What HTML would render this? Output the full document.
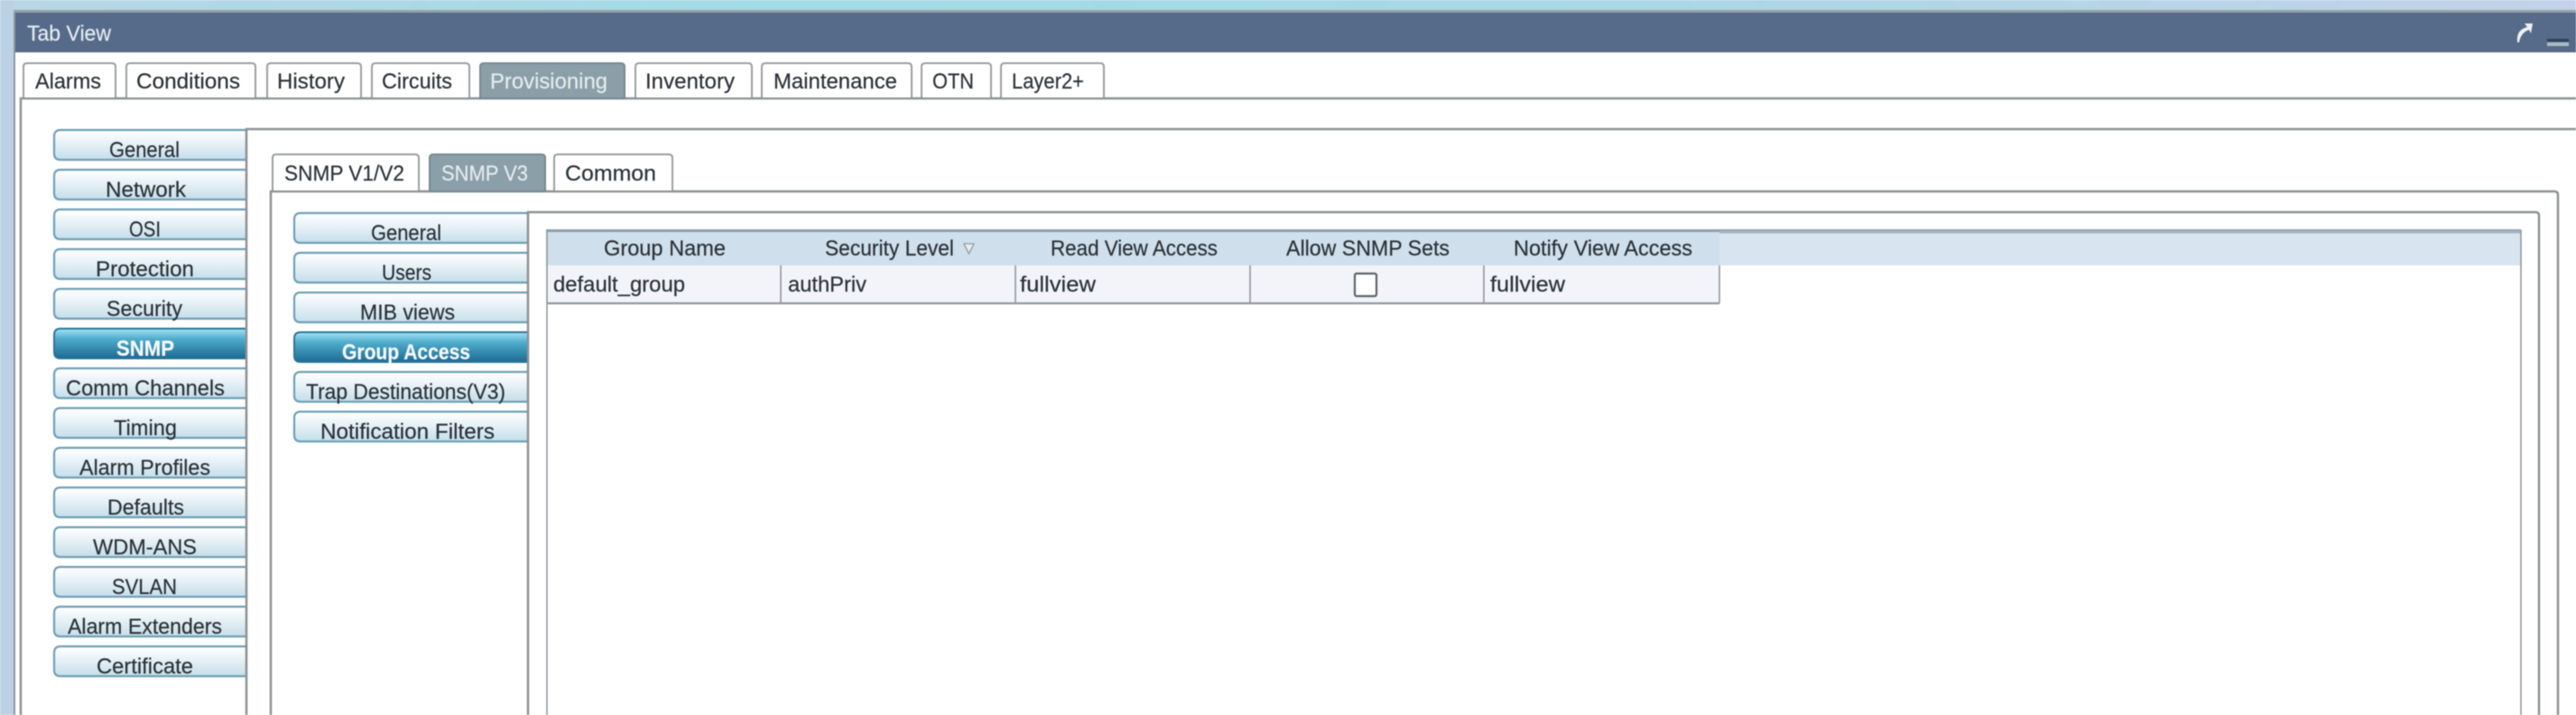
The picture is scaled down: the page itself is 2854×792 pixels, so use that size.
<!DOCTYPE html>
<html><head><meta charset="utf-8"><title>Tab View</title>
<style>
html,body{margin:0;padding:0;width:2854px;height:792px;overflow:hidden;background:#fff}
svg{display:block;filter:blur(.6px)}
text{font-family:"Liberation Sans",sans-serif;font-size:24.500px;fill:#2b3138;stroke:#2b3138;stroke-width:.2px}
.w{fill:#e4ebef;stroke:#e4ebef}
.b{fill:#f4f9fb;stroke:#f4f9fb;font-weight:bold}
.tab{fill:#fff;stroke:#9a9d9f;stroke-width:2}
.act{fill:#8b9fa8;stroke:#77888f;stroke-width:2}
.ln{stroke:#8e9193;stroke-width:2.5;fill:none}
.dv{stroke:#8f979d;stroke-width:1.6}
</style></head><body>
<svg width="2854" height="792" viewBox="0 0 2854 792" xmlns="http://www.w3.org/2000/svg">
<defs>
<linearGradient id="sky" x1="0" x2="1" y1="0" y2="0"><stop offset="0" stop-color="#b9d6e4"/><stop offset=".3" stop-color="#a2dbe5"/><stop offset=".6" stop-color="#a8d8e4"/><stop offset="1" stop-color="#c3d2e8"/></linearGradient>
<linearGradient id="btn" x1="0" x2="0" y1="0" y2="1"><stop offset="0" stop-color="#fff"/><stop offset=".2" stop-color="#f6fafc"/><stop offset="1" stop-color="#c5deea"/></linearGradient>
<linearGradient id="on" x1="0" x2="0" y1="0" y2="1"><stop offset="0" stop-color="#a4e4f8"/><stop offset=".35" stop-color="#4eaccb"/><stop offset="1" stop-color="#1d6a93"/></linearGradient>
<g id="b"><path d="M214 1H8Q1 1 1 8V27Q1 34 8 34H214Z" fill="url(#btn)" stroke="#6e9fb6" stroke-width="2.2"/></g>
<g id="bon"><path d="M214 1H8Q1 1 1 8V27Q1 34 8 34H214Z" fill="url(#on)" stroke="#2b7598" stroke-width="2"/></g>
<g id="s"><path d="M260 1H8Q1 1 1 8V27Q1 34 8 34H260Z" fill="url(#btn)" stroke="#6e9fb6" stroke-width="2.2"/></g>
<g id="son"><path d="M260 1H8Q1 1 1 8V27Q1 34 8 34H260Z" fill="url(#on)" stroke="#2b7598" stroke-width="2"/></g>
</defs>

<rect width="2854" height="792" fill="#fff"/>
<rect width="2854" height="13" fill="url(#sky)"/>
<rect y="0" width="15" height="792" fill="#bcd1e3"/>
<rect x="15" y="11" width="2839" height="3" fill="#94a2a8"/>
<rect x="15" y="14" width="2839" height="44" fill="#566b8a"/>
<rect x="15" y="14" width="2" height="778" fill="#8c979e"/>
<text x="30" y="45" class="w" textLength="93" lengthAdjust="spacingAndGlyphs">Tab View</text>
<path d="M2789 47C2788 37 2792 32 2800 30L2797 26L2806 26L2804 37L2802 33C2796 35 2792 40 2791 47Z" fill="#eef2f5"/>
<rect x="2822" y="43" width="24" height="3" fill="#2f4257"/>
<rect x="2822" y="47" width="24" height="4" fill="#a9bcc1"/>

<!-- main tabs -->
<path class="ln" d="M23 792V109H2854"/>
<path class="tab" d="M26 108V74Q26 70 30 70H124Q128 70 128 74V108"/>
<path class="tab" d="M140 108V74Q140 70 144 70H279Q283 70 283 74V108"/>
<path class="tab" d="M296 108V74Q296 70 300 70H396Q400 70 400 74V108"/>
<path class="tab" d="M412 108V74Q412 70 416 70H516Q520 70 520 74V108"/>
<path class="act" d="M532 109V74Q532 70 536 70H688Q692 70 692 74V109Z"/>
<path class="tab" d="M704 108V74Q704 70 708 70H829Q833 70 833 74V108"/>
<path class="tab" d="M844 108V74Q844 70 848 70H1006Q1010 70 1010 74V108"/>
<path class="tab" d="M1021 108V74Q1021 70 1025 70H1094Q1098 70 1098 74V108"/>
<path class="tab" d="M1109 108V74Q1109 70 1113 70H1219Q1223 70 1223 74V108"/>
<text x="39" y="98" textLength="73" lengthAdjust="spacingAndGlyphs">Alarms</text>
<text x="151" y="98" textLength="115" lengthAdjust="spacingAndGlyphs">Conditions</text>
<text x="307" y="98" textLength="75" lengthAdjust="spacingAndGlyphs">History</text>
<text x="423" y="98" textLength="78" lengthAdjust="spacingAndGlyphs">Circuits</text>
<text x="543" y="98" class="w" textLength="130" lengthAdjust="spacingAndGlyphs">Provisioning</text>
<text x="715" y="98" textLength="99" lengthAdjust="spacingAndGlyphs">Inventory</text>
<text x="857" y="98" textLength="137" lengthAdjust="spacingAndGlyphs">Maintenance</text>
<text x="1033" y="98" textLength="46" lengthAdjust="spacingAndGlyphs">OTN</text>
<text x="1121" y="98" textLength="80" lengthAdjust="spacingAndGlyphs">Layer2+</text>

<!-- left nav -->
<use href="#b" x="59" y="143"/><use href="#b" x="59" y="187"/><use href="#b" x="59" y="231"/><use href="#b" x="59" y="275"/><use href="#b" x="59" y="319"/><use href="#bon" x="59" y="363"/><use href="#b" x="59" y="407"/><use href="#b" x="59" y="451"/><use href="#b" x="59" y="495"/><use href="#b" x="59" y="539"/><use href="#b" x="59" y="583"/><use href="#b" x="59" y="627"/><use href="#b" x="59" y="671"/><use href="#b" x="59" y="715"/>
<text x="121" y="174" textLength="78" lengthAdjust="spacingAndGlyphs">General</text>
<text x="117" y="218" textLength="89" lengthAdjust="spacingAndGlyphs">Network</text>
<text x="143" y="262" textLength="35" lengthAdjust="spacingAndGlyphs">OSI</text>
<text x="106" y="306" textLength="109" lengthAdjust="spacingAndGlyphs">Protection</text>
<text x="118" y="350" textLength="84" lengthAdjust="spacingAndGlyphs">Security</text>
<text x="129" y="394" class="b" textLength="64" lengthAdjust="spacingAndGlyphs">SNMP</text>
<text x="73" y="438" textLength="176" lengthAdjust="spacingAndGlyphs">Comm Channels</text>
<text x="126" y="482" textLength="70" lengthAdjust="spacingAndGlyphs">Timing</text>
<text x="88" y="526" textLength="145" lengthAdjust="spacingAndGlyphs">Alarm Profiles</text>
<text x="119" y="570" textLength="85" lengthAdjust="spacingAndGlyphs">Defaults</text>
<text x="103" y="614" textLength="115" lengthAdjust="spacingAndGlyphs">WDM-ANS</text>
<text x="124" y="658" textLength="72" lengthAdjust="spacingAndGlyphs">SVLAN</text>
<text x="75" y="702" textLength="171" lengthAdjust="spacingAndGlyphs">Alarm Extenders</text>
<text x="107" y="746" textLength="107" lengthAdjust="spacingAndGlyphs">Certificate</text>

<!-- inner panel -->
<path class="ln" d="M273 792V143H2854"/>
<path class="ln" d="M300 792V212H2830Q2834 212 2834 216V792"/>
<path class="tab" d="M302 211V175Q302 171 306 171H460Q464 171 464 175V211"/>
<path class="act" d="M476 212V175Q476 171 480 171H600Q604 171 604 175V212Z"/>
<path class="tab" d="M614 211V175Q614 171 618 171H741Q745 171 745 175V211"/>
<text x="315" y="200" textLength="133" lengthAdjust="spacingAndGlyphs">SNMP V1/V2</text>
<text x="489" y="200" class="w" textLength="96" lengthAdjust="spacingAndGlyphs">SNMP V3</text>
<text x="626" y="200" textLength="101" lengthAdjust="spacingAndGlyphs">Common</text>

<!-- sub nav -->
<use href="#s" x="325" y="235"/><use href="#s" x="325" y="279"/><use href="#s" x="325" y="323"/><use href="#son" x="325" y="367"/><use href="#s" x="325" y="411"/><use href="#s" x="325" y="455"/>
<text x="411" y="266" textLength="78" lengthAdjust="spacingAndGlyphs">General</text>
<text x="423" y="310" textLength="55" lengthAdjust="spacingAndGlyphs">Users</text>
<text x="399" y="354" textLength="105" lengthAdjust="spacingAndGlyphs">MIB views</text>
<text x="379" y="398" class="b" textLength="142" lengthAdjust="spacingAndGlyphs">Group Access</text>
<text x="339" y="442" textLength="221" lengthAdjust="spacingAndGlyphs">Trap Destinations(V3)</text>
<text x="355" y="486" textLength="193" lengthAdjust="spacingAndGlyphs">Notification Filters</text>
<path class="ln" d="M585 792V235H2809Q2813 235 2813 239V792"/>

<!-- table -->
<rect x="605" y="255" width="1300" height="39" fill="#cfdfeb"/>
<rect x="1905" y="255" width="888" height="39" fill="#d8e4ef"/>
<rect x="605" y="294" width="1300" height="42" fill="#f2f4fa"/>
<path d="M605 255.500H2793" stroke="#8b9eae" stroke-width="3"/>
<path d="M1905 257H2793" stroke="#a5b5c2" stroke-width="3"/>
<path class="dv" d="M606 255V792"/>
<path class="dv" d="M2793 255V792"/>
<path d="M606 336H1905" stroke="#8f989e" stroke-width="2.2"/>
<path class="dv" d="M865 294V336M1125 294V336M1385 294V336M1644 294V336M1905 294V336"/>
<text x="669" y="283" textLength="135" lengthAdjust="spacingAndGlyphs">Group Name</text>
<text x="914" y="283" textLength="143" lengthAdjust="spacingAndGlyphs">Security Level</text>
<path d="M1068 270H1079L1073.500 281Z" fill="#e6eef3" stroke="#8f9ca6" stroke-width="1.300"/>
<text x="1164" y="283" textLength="185" lengthAdjust="spacingAndGlyphs">Read View Access</text>
<text x="1425" y="283" textLength="181" lengthAdjust="spacingAndGlyphs">Allow SNMP Sets</text>
<text x="1677" y="283" textLength="198" lengthAdjust="spacingAndGlyphs">Notify View Access</text>
<text x="613" y="323" textLength="146" lengthAdjust="spacingAndGlyphs">default_group</text>
<text x="873" y="323" textLength="87" lengthAdjust="spacingAndGlyphs">authPriv</text>
<text x="1130" y="323" textLength="84" lengthAdjust="spacingAndGlyphs">fullview</text>
<rect x="1501" y="303" width="24" height="25" rx="2" fill="#fff" stroke="#5c6367" stroke-width="2.2"/>
<text x="1651" y="323" textLength="83" lengthAdjust="spacingAndGlyphs">fullview</text>
</svg>
</body></html>
